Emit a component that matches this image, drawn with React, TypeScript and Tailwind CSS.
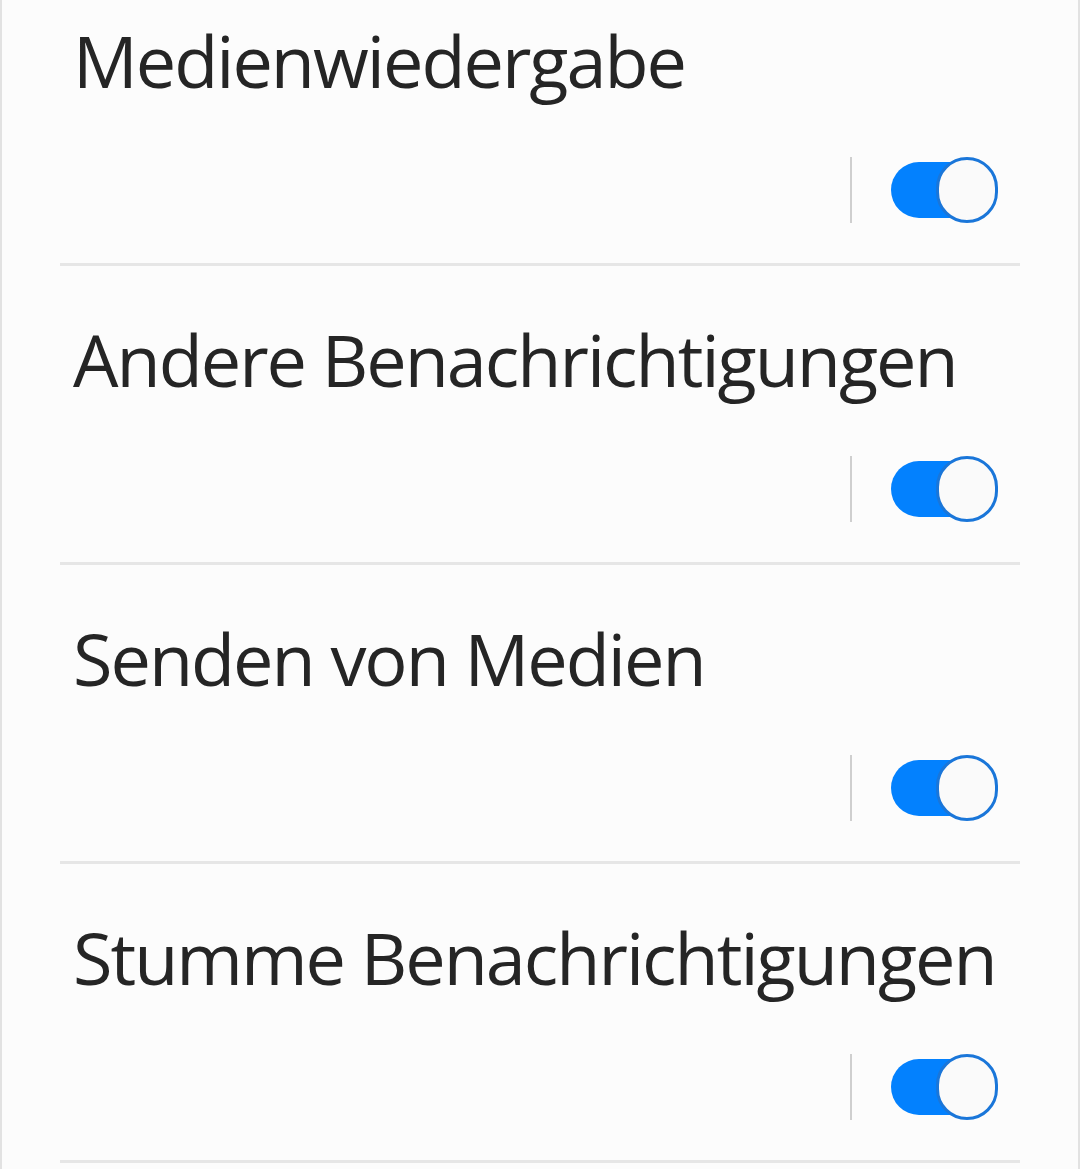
import React from "react";

const items = ["Medienwiedergabe", "Andere Benachrichtigungen", "Senden von Medien", "Stumme Benachrichtigungen"];

function Toggle() {
  return (
    <div className="relative h-[66px] w-[107px]">
      <div className="absolute left-0 top-[5px] h-[56px] w-[96px] rounded-full bg-[#0381fe]" />
      <div className="absolute left-[45px] top-0 h-[66px] w-[62px] rounded-full border-[3px] border-[#1a76d9] bg-[#fafafa]" />
    </div>
  );
}

function Row({ title }: { title: string }) {
  return (
    <div className="flex flex-col">
      <div className="pl-[73px] pt-[57px] text-[72px] leading-[72px] tracking-[-2px] text-[#252525]" style={{ fontFamily: '"Open Sans", sans-serif' }}>
        {title}
      </div>
      <div className="flex items-center justify-end pr-[82px] pt-[61px] pb-[40px]">
        <div className="h-[66px] w-[2px] bg-[#cfcfcf]" />
        <div className="ml-[39px]">
          <Toggle />
        </div>
      </div>
      <div className="mx-[60px] h-[3px] bg-[#e6e6e6]" />
    </div>
  );
}

export default function App() {
  return (
    <div className="h-[1169px] w-[1080px] overflow-hidden border-x-2 border-[#e2e2e2] bg-[#fcfcfc]">
      <div className="-mt-[33px] -mx-[2px]">
        {items.map((t) => (
          <Row key={t} title={t} />
        ))}
      </div>
    </div>
  );
}
